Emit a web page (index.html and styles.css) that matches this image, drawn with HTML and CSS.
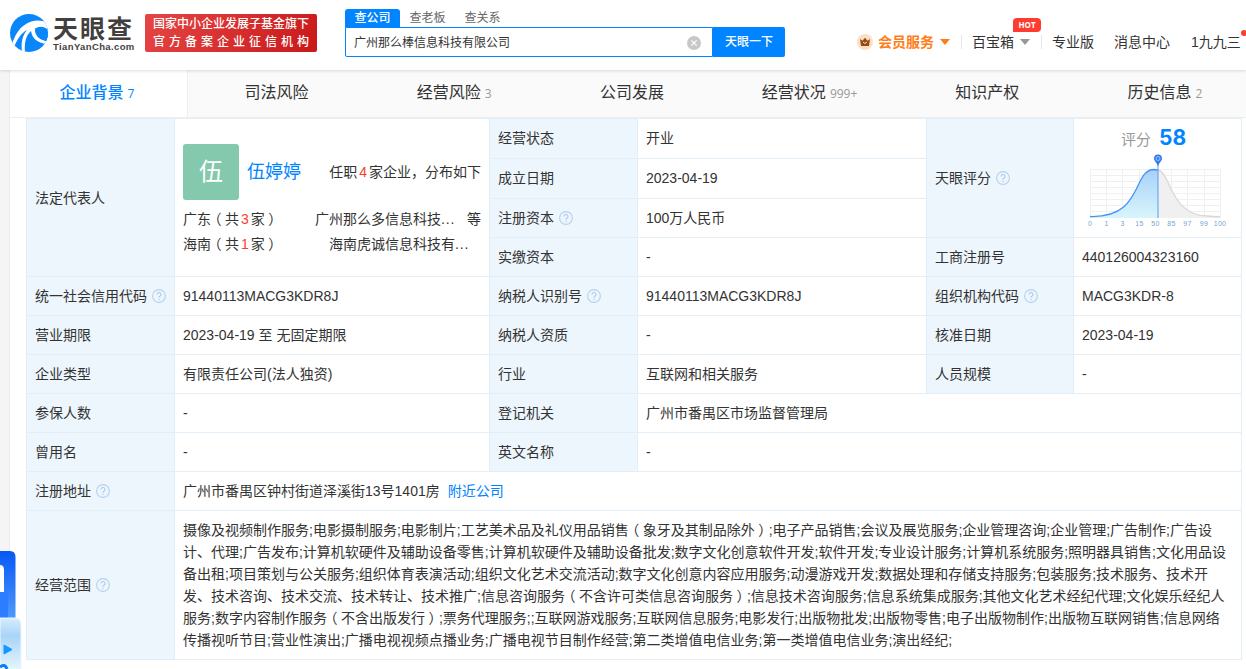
FILE: index.html
```html
<!DOCTYPE html>
<html lang="zh-CN">
<head>
<meta charset="utf-8">
<title>天眼查</title>
<link rel="stylesheet" href="styles.css">
</head>
<body>
<svg class="defs" width="0" height="0"><symbol id="help" viewBox="0 0 14 14"><circle cx="7" cy="7" r="6.4" fill="none" stroke="#b3d2ee" stroke-width="1.1"/><path d="M5 5.6a2 2 0 1 1 2.9 1.7Q7 7.8 7 8.7" fill="none" stroke="#a9cbea" stroke-width="1.1"/><circle cx="7" cy="10.4" r=".7" fill="#a9cbea"/></symbol></svg>
<header class="header">
  <div class="logo">
    <svg class="logo-mark" viewBox="0 0 38 38">
      <defs><clipPath id="disc"><circle cx="19" cy="19" r="19"/></clipPath></defs>
      <g clip-path="url(#disc)">
        <rect width="38" height="38" fill="#0a86fb"/>
        <path d="M38 9C30 5 22 6 16 10C9 14 5 21 2 30L4 33C7 26 11 19 17 16C12 22 11 29 12 38L15 38C14 29 16 21 21 17C22 24 27 29 37 30L38 27C29 26 25 21 25 15C29 12 33 12 37 15Z" fill="#fff"/>
        <path d="M25 14.500C31 12 36 14 38 19V27C30 27 25 22 25 14.500Z" fill="#0a86fb"/>
      </g>
    </svg>
    <div class="logo-words"><div class="logo-cn">天眼查</div><div class="logo-en">TianYanCha.com</div></div>
  </div>
  <div class="badge"><span class="badge-top">国家中小企业发展子基金旗下</span><span class="badge-bottom">官方备案企业征信机构</span></div>
  <div class="search">
    <div class="search-tabs"><span class="search-tab search-tab-on">查公司</span><span class="search-tab">查老板</span><span class="search-tab">查关系</span></div>
    <div class="search-row">
      <div class="search-input"><span>广州那么棒信息科技有限公司</span>
        <svg width="14" height="14" viewBox="0 0 14 14"><circle cx="7" cy="7" r="7" fill="#c8c8c8"/><path d="M4.3 4.3l5.4 5.4M9.7 4.3L4.3 9.7" stroke="#fff" stroke-width="1.2"/></svg>
      </div>
      <div class="search-button">天眼一下</div>
    </div>
  </div>
  <nav class="user-nav">
    <svg class="crown" width="16" height="16" viewBox="0 0 16 16"><circle cx="8" cy="8" r="8" fill="#fddfc6"/><path d="M3 5l2.5 1.8L8 3.8l2.5 3L13 5l-1 7H4z" fill="#944a10"/><path d="M6 8q2 3 4 0" fill="none" stroke="#fddfc6"/></svg>
    <span class="vip">会员服务</span><i class="caret caret-orange"></i>
    <i class="divider"></i>
    <span class="toolbox">百宝箱<b class="hot">HOT</b></span><i class="caret caret-grey"></i>
    <i class="divider divider-second"></i>
    <span class="nav-pro">专业版</span><span class="nav-msg">消息中心</span><span class="nav-user">1九九三<i class="dot"></i></span>
  </nav>
</header>
<main class="page">
  <div class="tabs">
    <div class="tab tab-on">企业背景<small>7</small></div><div class="tab">司法风险</div><div class="tab">经营风险<small>3</small></div><div class="tab">公司发展</div><div class="tab">经营状况<small>999+</small></div><div class="tab">知识产权</div><div class="tab">历史信息<small>2</small></div>
  </div>
  <section class="info">
    <div class="cell label tall">法定代表人</div>
    <div class="cell tall person">
      <div class="person-head"><span class="avatar">伍</span><a class="person-name">伍婷婷</a><span class="person-note">任职<em>4</em>家企业，分布如下</span></div>
      <div class="person-line"><span class="region">广东<span class="paren">（</span>共<em>3</em>家<span class="paren">）</span></span><span class="firm">广州那么多信息科技<span class="more">...</span></span><span class="etc">等</span></div>
      <div class="person-line"><span class="region">海南<span class="paren">（</span>共<em>1</em>家<span class="paren">）</span></span><span class="firm firm-second">海南虎诚信息科技有<span class="more">...</span></span></div>
    </div>
    <div class="cell label high">经营状态</div><div class="cell high">开业</div>
    <div class="cell label score-label">天眼评分<svg class="help"><use href="#help"/></svg></div>
    <div class="cell score">
      <div class="score-title">评分<b>58</b></div>
      <svg class="chart" width="146" height="76" viewBox="0 0 146 76">
        <defs><linearGradient id="fill" x2="0" y2="1"><stop stop-color="#a8d1f8"/><stop offset="1" stop-color="#d8f5fc"/></linearGradient></defs>
        <path d="M6.5 15.500H136.500M6.500 21.500H136.500M6.500 27.500H136.500M6.500 33.500H136.500M6.500 39.500H136.500M6.500 45.500H136.500M6.500 51.500H136.500M6.500 57.500H136.500M6.500 63.500H136.500M6.500 15V64M22.500 15V64M38.500 15V64M55.500 15V64M71.500 15V64M87.500 15V64M103.500 15V64M120.500 15V64M136.500 15V64" stroke="#f0f0f0" fill="none"/>
        <path d="M74 16C87 19 86 61 123 62L136 63H74Z" fill="#f0f0f0"/>
        <path d="M74 16C87 19 86 61 123 62L136 63" fill="none" stroke="#d8d8d8" stroke-width="1.300"/>
        <path d="M6 63C60 64 48 16 70 15.500L74 16V64H6Z" fill="url(#fill)"/>
        <path d="M6 62.500C60 64 48 16 70 15.500L74 16" fill="none" stroke="#4494f5" stroke-width="1.300"/>
        <path d="M74 10V64" stroke="#5b99f2"/>
        <path d="M74 12.500C73 8.500 70 7 70 4.500A4 4 0 0 1 78 4.500C78 7 75 8.500 74 12.500Z" fill="#3478ee"/><circle cx="74" cy="4.500" r="2" fill="#3478ee" stroke="#b9dcff" stroke-width=".8"/>
        <g class="axis"><text x="6" y="72">0</text><text x="22.500" y="72">1</text><text x="38.500" y="72">3</text><text x="55.500" y="72">15</text><text x="71.500" y="72">50</text><text x="87.500" y="72">85</text><text x="103.500" y="72">97</text><text x="120" y="72">99</text><text x="136" y="72">100</text></g>
      </svg>
    </div>
    <div class="cell label high">成立日期</div><div class="cell high">2023-04-19</div>
    <div class="cell label">注册资本<svg class="help"><use href="#help"/></svg></div><div class="cell">100万人民币</div>
    <div class="cell label">实缴资本</div><div class="cell">-</div><div class="cell label">工商注册号</div><div class="cell">440126004323160</div>
    <div class="cell label">统一社会信用代码<svg class="help"><use href="#help"/></svg></div><div class="cell">91440113MACG3KDR8J</div><div class="cell label">纳税人识别号<svg class="help"><use href="#help"/></svg></div><div class="cell">91440113MACG3KDR8J</div><div class="cell label">组织机构代码<svg class="help"><use href="#help"/></svg></div><div class="cell">MACG3KDR-8</div>
    <div class="cell label">营业期限</div><div class="cell">2023-04-19 至 无固定期限</div><div class="cell label">纳税人资质</div><div class="cell">-</div><div class="cell label">核准日期</div><div class="cell">2023-04-19</div>
    <div class="cell label">企业类型</div><div class="cell">有限责任公司(法人独资)</div><div class="cell label">行业</div><div class="cell">互联网和相关服务</div><div class="cell label">人员规模</div><div class="cell">-</div>
    <div class="cell label">参保人数</div><div class="cell">-</div><div class="cell label">登记机关</div><div class="cell wide">广州市番禺区市场监督管理局</div>
    <div class="cell label">曾用名</div><div class="cell">-</div><div class="cell label">英文名称</div><div class="cell wide">-</div>
    <div class="cell label">注册地址<svg class="help"><use href="#help"/></svg></div><div class="cell full">广州市番禺区钟村街道泽溪街13号1401房<a class="nearby">附近公司</a></div>
    <div class="cell label">经营范围<svg class="help"><use href="#help"/></svg></div>
    <div class="cell full"><p class="scope">摄像及视频制作服务;电影摄制服务;电影制片;工艺美术品及礼仪用品销售<span class="paren">（</span>象牙及其制品除外<span class="paren">）</span>;电子产品销售;会议及展览服务;企业管理咨询;企业管理;广告制作;广告设<br>计、代理;广告发布;计算机软硬件及辅助设备零售;计算机软硬件及辅助设备批发;数字文化创意软件开发;软件开发;专业设计服务;计算机系统服务;照明器具销售;文化用品设<br>备出租;项目策划与公关服务;组织体育表演活动;组织文化艺术交流活动;数字文化创意内容应用服务;动漫游戏开发;数据处理和存储支持服务;包装服务;技术服务、技术开<br>发、技术咨询、技术交流、技术转让、技术推广;信息咨询服务<span class="paren">（</span>不含许可类信息咨询服务<span class="paren">）</span>;信息技术咨询服务;信息系统集成服务;其他文化艺术经纪代理;文化娱乐经纪人<br>服务;数字内容制作服务<span class="paren">（</span>不含出版发行<span class="paren">）</span>;票务代理服务;;互联网游戏服务;互联网信息服务;电影发行;出版物批发;出版物零售;电子出版物制作;出版物互联网销售;信息网络<br>传播视听节目;营业性演出;广播电视视频点播业务;广播电视节目制作经营;第二类增值电信业务;第一类增值电信业务;演出经纪;</p></div>
  </section>
</main>
<svg class="floater" width="24" height="118" viewBox="0 0 24 118">
  <defs><linearGradient id="blue" x2="0" y2="1"><stop stop-color="#0758f5"/><stop offset="1" stop-color="#5ba5ff"/></linearGradient><linearGradient id="pale" x2="0" y2="1"><stop stop-color="#d5edfb"/><stop offset=".35" stop-color="#a9d4f8"/><stop offset="1" stop-color="#e3f5fd"/></linearGradient></defs>
  <path d="M0 0H10Q15.500 0 15.500 6V80H0Z" fill="url(#blue)"/><path d="M0 14Q4 14 4 19V41H0Z" fill="#fff"/><path d="M4 34L8 41V67H0V41H4Z" fill="#2c7dff"/>
  <path d="M0 67H15Q21 67 21 74V118H0Z" fill="url(#pale)" stroke="#eef8ff"/>
  <path d="M4 94L12 98.500L4 103Z" fill="#1597ff" stroke="#1597ff" stroke-linejoin="round"/><path d="M0 116Q5 112 7 118" fill="none" stroke="#087df5" stroke-width="3"/>
</svg>
</body>
</html>
```
FILE: styles.css
```css
* { box-sizing: border-box; }
body { margin: 0; height: 669px; overflow: hidden; background: #f5f5f5; color: #333; font: 14px/22px "Liberation Sans", "Noto Sans CJK SC", sans-serif; text-spacing-trim: space-all; white-space: nowrap; }
i, em { font-style: normal; }
.defs { position: absolute; }
.header { position: relative; z-index: 1; display: flex; align-items: flex-start; height: 70px; padding-left: 10px; background: #fff; box-shadow: 0 1px 3px rgba(0, 0, 0, .14); }
.logo { display: flex; width: 135px; padding-top: 14px; gap: 5px; }
.logo-mark { width: 38px; height: 38px; flex: none; }
.logo-words { padding-top: 1px; }
.logo-cn { height: 26px; font: 700 25px/24px "Noto Sans CJK SC", sans-serif; letter-spacing: 2px; color: #443f3f; }
.logo-en { font: bold 9.5px/11px "Liberation Sans", sans-serif; letter-spacing: .38px; color: #443f3f; }
.badge { display: flex; flex-direction: column; width: 172px; height: 38px; margin-top: 14px; padding: 1px 8px; border-radius: 2px; background: linear-gradient(120deg, #e64545, #c91919); color: #fff; font-size: 12px; line-height: 18px; font-weight: 500; }
.badge-bottom { letter-spacing: 4px; line-height: 18px; }
.search { width: 440px; margin: 9px 0 0 28px; }
.search-tabs { display: flex; height: 18px; font-size: 12px; line-height: 18px; }
.search-tab { width: 55px; text-align: center; color: #666; }
.search-tab-on { border-radius: 3px 3px 0 0; background: #0084ff; color: #fff; font-weight: 500; }
.search-row { display: flex; height: 30px; }
.search-input { display: flex; align-items: center; justify-content: space-between; width: 368px; padding: 1px 11px 0 8px; border: 1px solid #0084ff; border-radius: 0 0 0 2px; font-size: 12px; }
.search-button { width: 72px; border-radius: 0 2px 2px 0; background: #0084ff; color: #fff; font-size: 12px; font-weight: 500; line-height: 30px; text-align: center; }
.user-nav { display: flex; align-items: center; height: 22px; margin: 31px 0 0 72px; }
.crown { margin-right: 5px; }
.vip { color: #ff7d18; font-weight: bold; }
.caret { margin-left: 6px; border: 5px solid transparent; border-top: 6px solid #999; border-bottom: 0; }
.caret-orange { border-top-color: #ff7d18; }
.divider { width: 1px; height: 14px; margin: 0 10px 0 11px; background: #e5e5e5; }
.toolbox, .nav-user { position: relative; }
.hot { position: absolute; left: 41px; top: -13px; width: 28px; height: 14px; border-radius: 4px 4px 4px 0; background: #ff3c30; color: #fff; font: bold 8px/14px "Open Sans", sans-serif; text-align: center; }
.nav-msg { margin: 0 21px 0 20px; }
.dot { position: absolute; right: -6px; top: -1px; width: 6px; height: 6px; border-radius: 3px; background: #ff3c30; }
.page { width: 1246px; height: 599px; margin-left: 9px; background: #fff; border-left: 1px solid #ececec; }
.tabs { display: flex; height: 48px; background: #fafafa; border-bottom: 1px solid #eee; }
.tab { flex: 0 0 177.700px; padding-top: 1px; text-align: center; font-size: 16px; line-height: 44px; }
.tab small { margin-left: 4px; color: #999; font: 12px "Open Sans", sans-serif; }
.tab-on { padding-right: 3px; background: #fff; color: #0084ff; font-weight: 500; border-right: 1px solid #eee; }
.tab-on small { color: #0084ff; }
.info { display: grid; grid-template-columns: 148px 315px 148px 289px 147px 168px; grid-template-rows: 40px 40px repeat(8, 39px) 149px; width: 1216px; margin-left: 16px; border: solid #e2eef8; border-width: 1px 0 0 1px; }
.cell { display: flex; align-items: center; padding: 0 8px; border: solid #e2eef8; border-width: 0 1px 1px 0; }
.label { background: #eef6fd; }
.high { padding-bottom: 2px; }
.tall { grid-row: span 4; }
.score-label, .score { grid-row: span 3; }
.wide { grid-column: span 3; }
.full { grid-column: span 5; }
.help { width: 14px; height: 14px; margin-left: 5px; flex: none; }
.paren { margin: 0 3.5px; font-family: "Noto Sans CJK SC", sans-serif; font-feature-settings: "halt"; line-height: 1; }
.person { flex-direction: column; align-items: stretch; padding-top: 25px; }
.person-head { display: flex; align-items: center; height: 56px; margin-bottom: 7px; }
.avatar { width: 56px; height: 56px; border-radius: 3px; background: #84c9ae; color: #fff; font-size: 24px; line-height: 56px; text-align: center; }
.person-name { margin-left: 8px; font-size: 18px; color: #0084ff; }
.person-note { margin-left: auto; }
.person em { margin: 0 2px; color: #ff3b30; }
.person-line { display: flex; height: 25px; line-height: 25px; }
.region { width: 96px; }
.firm { margin-left: 36px; }
.firm-second { margin-left: 50px; }
.more { letter-spacing: .8px; }
.etc { margin-left: auto; }
.score { flex-direction: column; justify-content: flex-start; padding: 7px 12px 7px 10px; }
.score-title { height: 29px; padding-right: 6px; line-height: 24px; font-size: 15px; color: #999; }
.score-title b { margin-left: 8px; font: bold 21px/24px Inter, sans-serif; color: #0084ff; }
.chart { flex: none; }
.axis { fill: #7d9fd3; font: 7px "Liberation Sans", sans-serif; text-anchor: middle; letter-spacing: .3px; }
.nearby { margin-left: 8px; color: #0084ff; }
.scope { margin: 0; }
.floater { position: absolute; left: 0; top: 551px; z-index: 2; }
```
